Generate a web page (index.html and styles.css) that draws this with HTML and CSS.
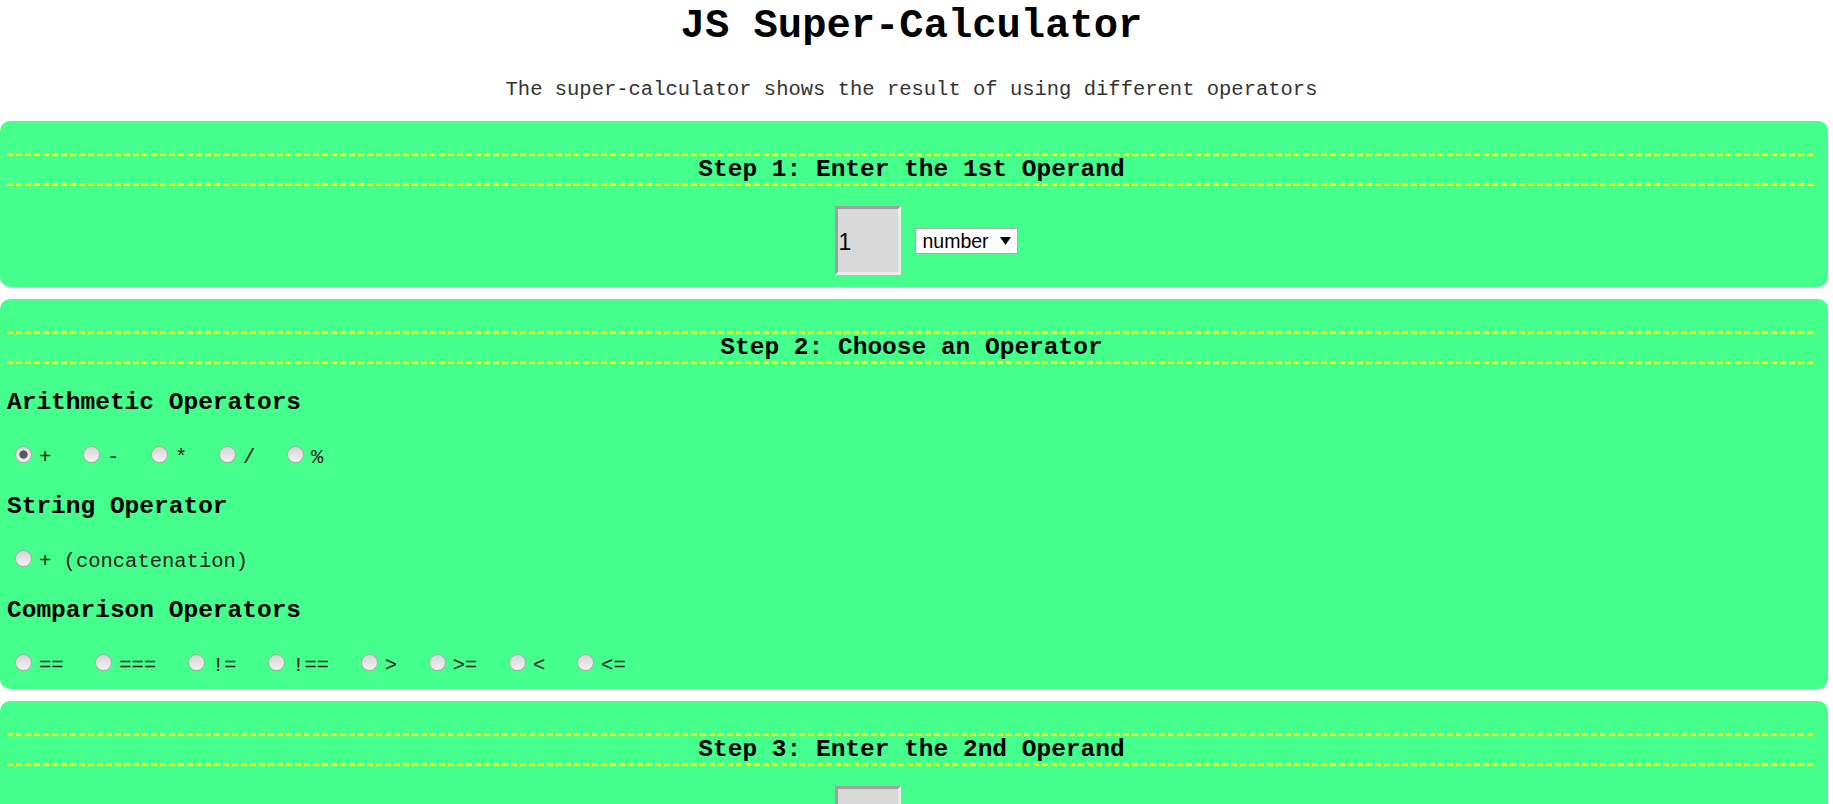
FILE: index.html
```html
<!DOCTYPE html>
<html lang="en">
<head>
<meta charset="utf-8">
<title>JS Super-Calculator</title>
<link rel="stylesheet" href="styles.css">
</head>
<body>
  <header class="page-head">
    <h1 class="title">JS Super-Calculator</h1>
    <p class="subtitle">The super-calculator shows the result of using different operators</p>
  </header>

  <section class="step">
    <h2 class="step-head">Step 1: Enter the 1st Operand</h2>
    <div class="operand-row">
      <input class="operand" type="text" value="1">
      <span class="select-wrap">
        <select class="type-select"><option>number</option><option>string</option></select>
        <svg class="select-arrow" width="11" height="8" viewBox="0 0 11 8"><path d="M0 0H11L5.5 8Z" fill="#000"/></svg>
      </span>
    </div>
  </section>

  <section class="step step-ops">
    <h2 class="step-head">Step 2: Choose an Operator</h2>
    <h3 class="group-title">Arithmetic Operators</h3>
    <div class="radio-row">
      <label class="opt"><input class="radio" type="radio" name="op" checked><span class="opt-text">+</span></label>
      <label class="opt"><input class="radio" type="radio" name="op"><span class="opt-text">-</span></label>
      <label class="opt"><input class="radio" type="radio" name="op"><span class="opt-text">*</span></label>
      <label class="opt"><input class="radio" type="radio" name="op"><span class="opt-text">/</span></label>
      <label class="opt"><input class="radio" type="radio" name="op"><span class="opt-text">%</span></label>
    </div>
    <h3 class="group-title">String Operator</h3>
    <div class="radio-row">
      <label class="opt"><input class="radio" type="radio" name="op"><span class="opt-text">+ (concatenation)</span></label>
    </div>
    <h3 class="group-title">Comparison Operators</h3>
    <div class="radio-row">
      <label class="opt"><input class="radio" type="radio" name="op"><span class="opt-text">==</span></label>
      <label class="opt"><input class="radio" type="radio" name="op"><span class="opt-text">===</span></label>
      <label class="opt"><input class="radio" type="radio" name="op"><span class="opt-text">!=</span></label>
      <label class="opt"><input class="radio" type="radio" name="op"><span class="opt-text">!==</span></label>
      <label class="opt"><input class="radio" type="radio" name="op"><span class="opt-text">&gt;</span></label>
      <label class="opt"><input class="radio" type="radio" name="op"><span class="opt-text">&gt;=</span></label>
      <label class="opt"><input class="radio" type="radio" name="op"><span class="opt-text">&lt;</span></label>
      <label class="opt"><input class="radio" type="radio" name="op"><span class="opt-text">&lt;=</span></label>
    </div>
  </section>

  <section class="step">
    <h2 class="step-head">Step 3: Enter the 2nd Operand</h2>
    <div class="operand-row">
      <input class="operand" type="text" value="">
      <span class="select-wrap">
        <select class="type-select"><option>number</option><option>string</option></select>
        <svg class="select-arrow" width="11" height="8" viewBox="0 0 11 8"><path d="M0 0H11L5.5 8Z" fill="#000"/></svg>
      </span>
    </div>
  </section>
</body>
</html>
```

FILE: styles.css
```css
html, body {
  margin: 0;
  padding: 0;
  background: #ffffff;
}

body {
  font-family: "Liberation Mono", "Courier New", monospace;
  color: #000;
}

.page-head {
  padding: 0 17px 0 7px;
  text-align: center;
}

.title {
  margin: 3px 0 0;
  font-size: 40.5px;
  line-height: 46px;
  font-weight: bold;
}

.subtitle {
  margin: 29px 0 20px;
  font-size: 20.5px;
  line-height: 23px;
  color: #333;
}

.step {
  background: #44ff8b;
  border-radius: 10px;
  margin: 0 5px 12px 0;
  padding: 32px 12px 0 7px;
}

.step-ops {
  padding-bottom: 12px;
}

.step-head {
  margin: 0;
  padding: 3px 0;
  font-size: 24.5px;
  line-height: 27px;
  font-weight: bold;
  text-align: center;
  background-image:
    repeating-linear-gradient(90deg, #ffff00 0 6px, transparent 6px 9px),
    repeating-linear-gradient(90deg, #ffff00 0 6px, transparent 6px 9px);
  background-size: 100% 3px, 100% 3px;
  background-position: left top, left bottom;
  background-repeat: no-repeat;
}

.operand-row {
  display: flex;
  justify-content: center;
  align-items: center;
  gap: 14px;
  padding: 20px 0 12px 29px;
}

.operand {
  box-sizing: border-box;
  width: 66px;
  height: 69px;
  margin: 0;
  padding: 4px 0 0 1px;
  border-style: solid;
  border-width: 3px;
  border-color: #a0a0a0 #ececec #ececec #a0a0a0;
  background: #d9d9d9;
  font-family: "Liberation Sans", Arial, sans-serif;
  font-size: 23px;
  color: #000;
  outline: none;
}

.select-wrap {
  position: relative;
  display: inline-flex;
  margin-top: 1px;
}

.type-select {
  appearance: none;
  -webkit-appearance: none;
  box-sizing: border-box;
  width: 103px;
  height: 26px;
  margin: 0;
  padding: 0 0 0 7px;
  border: 1px solid #a9a9a9;
  border-radius: 0;
  background: #fff;
  font-family: "Liberation Sans", Arial, sans-serif;
  font-size: 19.5px;
  color: #000;
}

.select-arrow {
  position: absolute;
  right: 7px;
  top: 9px;
}

.group-title {
  margin: 25px 0 0;
  font-size: 24.5px;
  line-height: 28px;
  font-weight: bold;
}

.radio-row + .group-title {
  margin-top: 24px;
}

.radio-row {
  display: flex;
  align-items: flex-end;
  margin-top: 29px;
  height: 23px;
}

.opt {
  display: flex;
  align-items: flex-end;
  margin-right: 23.7px;
}

.radio {
  appearance: none;
  -webkit-appearance: none;
  box-sizing: border-box;
  width: 17px;
  height: 17px;
  margin: 0 7px 6px 8px;
  border-radius: 50%;
  border: 1px solid #a8a8a8;
  background: linear-gradient(#d6d6d6, #f2f2f2);
}

.radio:checked {
  background:
    radial-gradient(circle, #5a5a5a 0 3.8px, #e6e6e6 4.5px 5px, transparent 5.5px),
    linear-gradient(#d6d6d6, #f2f2f2);
}

.opt-text {
  font-size: 20.5px;
  line-height: 23px;
  color: #222;
  white-space: pre;
}
```
